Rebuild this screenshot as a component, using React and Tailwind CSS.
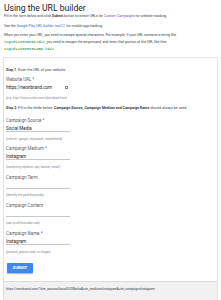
import React from "react";

const F = { fontFamily: "Roboto, 'Liberation Sans', sans-serif" };

function Field({ label, value, hint, icon }) {
  return (
    <div className="flex flex-col">
      <div className="h-[8px] leading-[8px] text-[4.5px] text-[#5f6368] whitespace-nowrap">{label}</div>
      <div className="w-[64px] h-[7px] border-b-[0.5px] border-[#c4c7cc] flex items-center justify-between">
        <span className="leading-[7px] text-[4.5px] text-[#202124] whitespace-nowrap">{value}</span>
        {icon && (
          <span className="w-[3px] h-[3px] border-[0.5px] border-[#80868b] mr-[3px]" />
        )}
      </div>
      <div className="mt-[3.5px] h-[6px] leading-[6px] text-[3.1px] text-[#80868b] whitespace-nowrap">{hint}</div>
    </div>
  );
}

export default function App() {
  return (
    <div className="w-[221px] h-[300px] bg-white overflow-hidden" style={F}>
      <div className="px-[4px]">
        <div className="pt-[2px] h-[14px] leading-[12px] text-[8.6px] text-[#202124] whitespace-nowrap">Using the URL builder</div>
        <div className="h-[4px] leading-[4px] text-[3.5px] text-[#3c4043] whitespace-nowrap">
          Fill in the form below and click <b>Submit</b> button to create URLs for <span className="text-[#7a4fb0]">Custom Campaigns</span> for website tracking.
        </div>
        <div className="mt-[6px] h-[4px] leading-[4px] text-[3.5px] text-[#3c4043] whitespace-nowrap">
          Use the <span className="text-[#3367d6]">Google Play URL builder tool ☐</span> for mobile app tracking.
        </div>
        <div className="mt-[3.5px] leading-[7px] text-[3.5px] text-[#3c4043] whitespace-nowrap">
          <div>When you enter your URL, you need to escape special characters. For example, if your URL contains a string like</div>
          <div>
            <span className="text-[#188038] text-[3.8px]" style={{ fontFamily: "'Liberation Mono', monospace" }}>tagid=1638563&amp;id=1</span>, you need to escape the ampersand, and enter that portion of the URL like this:
          </div>
          <div>
            <span className="text-[#188038] text-[3.8px]" style={{ fontFamily: "'Liberation Mono', monospace" }}>tagid=1638563&amp;amp;id=1</span>
          </div>
        </div>
      </div>

      <div className="mx-[3px] mt-[4.5px] border border-[#e3e3e3] bg-white">
        <div className="pt-[9px] pb-[8px] px-[2px]">
          <div className="h-[6px] leading-[6px] text-[3.6px] text-[#3c4043] whitespace-nowrap"><b>Step 1</b>: Enter the URL of your website.</div>
          <div className="mt-[3px] flex flex-col">
            <div className="h-[8px] leading-[8px] text-[4.5px] text-[#5f6368] whitespace-nowrap">Website URL *</div>
            <div className="w-[64px] h-[7px] flex items-center justify-between">
              <span className="leading-[7px] text-[4.5px] text-[#202124] whitespace-nowrap">https://neonbrand.com</span>
              <span className="w-[3px] h-[3px] border-[0.5px] border-[#80868b] mr-[2px]" />
            </div>
            <div className="mt-[4px] h-[6px] leading-[6px] text-[3.1px] text-[#80868b] whitespace-nowrap">(e.g. http://www.urchin.com/download.html)</div>
          </div>
          <div className="mt-[4px] h-[6px] leading-[6px] text-[3.6px] text-[#3c4043] whitespace-nowrap">
            <b>Step 2</b>: Fill in the fields below. <b>Campaign Source, Campaign Medium and Campaign Name</b> should always be used.
          </div>
          <div className="mt-[6px] flex flex-col gap-[3.75px]">
            <Field label="Campaign Source *" value="Social Media" hint="(referrer: google, citysearch, newsletter4)" />
            <Field label="Campaign Medium *" value="Instagram" hint="(marketing medium: cpc, banner, email)" />
            <Field label="Campaign Term" value="" hint="(identify the paid keywords)" />
            <Field label="Campaign Content" value="" hint="(use to differentiate ads)" />
            <Field label="Campaign Name *" value="Instagram" hint="(product, promo code, or slogan)" />
          </div>
          <button className="mt-[8.5px] ml-[1px] w-[26px] h-[10px] rounded-[1px] bg-[#4285f4] text-white text-[3.8px] font-bold tracking-[0.1px] flex items-center justify-center shadow-[0_0.5px_1px_rgba(0,0,0,0.3)]">
            SUBMIT
          </button>
        </div>
        <div className="h-[19px] bg-[#f1f1f1] border-t-[1.5px] border-[#dcdcdc] px-[2px] pt-[4px] leading-[6px] text-[3.1px] text-[#3c4043] whitespace-nowrap">
          https://neonbrand.com/?utm_source=Social%20Media&amp;utm_medium=Instagram&amp;utm_campaign=Instagram
        </div>
      </div>
    </div>
  );
}
